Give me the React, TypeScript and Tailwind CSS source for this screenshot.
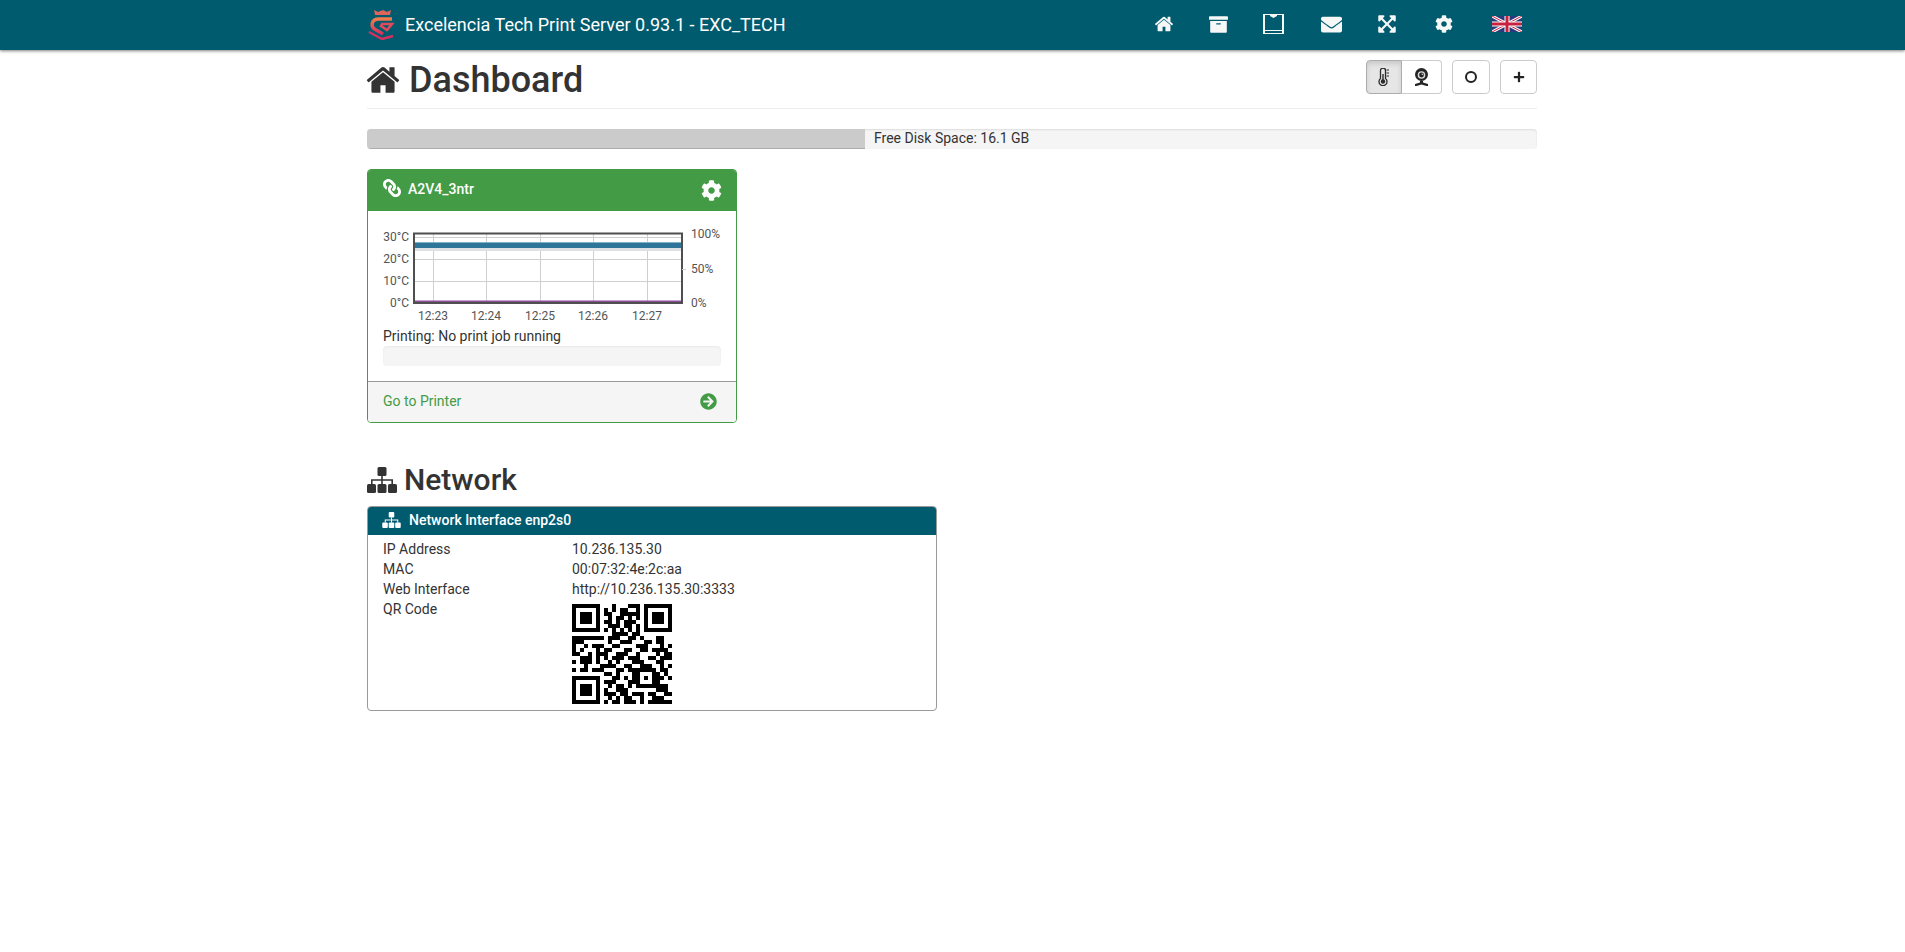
import React from 'react';
import { FaArchive, FaEnvelope, FaExpandArrowsAlt, FaCog, FaLink, FaArrowCircleRight, FaPlus } from 'react-icons/fa';

const qrRows = [
  '1111111000100011101111111',
  '1000001010101100101000001',
  '1011101011001111101011101',
  '1011101001011010101011101',
  '1011101011010111001011101',
  '1000001001110110101000001',
  '1111111010101010101111111',
  '0000000000111101100000000',
  '1111111101110011010001100',
  '1110000001001110001101100',
  '1001011100110000111000101',
  '1010001011000110011011110',
  '1100101110011100100001011',
  '0011101010111011100110111',
  '1011101001010001110001100',
  '0001000111100110011100101',
  '1011011100011011111110110',
  '0000000011010001100011010',
  '1111111000110101101011101',
  '1000001011100011100011000',
  '1011101001011010111111110',
  '1011101010011100000001110',
  '1011101011101101110110011',
  '1000001001010110010011100',
  '1111111010110111010111111',
];

const QrCode = () => (
  <svg width="100" height="100" viewBox="0 0 25 25" shapeRendering="crispEdges">
    {qrRows.map((row, y) =>
      row.split('').map((c, x) => (c === '1' ? <rect key={`${x}-${y}`} x={x} y={y} width="1" height="1" fill="#000" /> : null))
    )}
  </svg>
);

const Logo = () => (
  <svg width="30" height="30" viewBox="0 0 30 30">
    <defs>
      <linearGradient id="lg" x1="0" y1="0" x2="0" y2="1">
        <stop offset="0" stopColor="#ee7c4e" />
        <stop offset="1" stopColor="#d6305f" />
      </linearGradient>
    </defs>
    <path d="M7 0l4 2 5-2 4 2 4-2-1 5H8z" fill="#e0645a" />
    <path d="M25 9H12C4 9 3 17 9 20l7 4" fill="none" stroke="url(#lg)" strokeWidth="3.500" />
    <path d="M15 14h10l-5 6-6-4z" fill="none" stroke="#df4a5c" strokeWidth="2.500" />
    <path d="M2 22l13 7 11-3" fill="none" stroke="#d6305f" strokeWidth="2.500" />
  </svg>
);

// font awesome 4 style house, the roof stands apart from the body
const HomeIcon = ({ size }: { size: number }) => (
  <svg width={size} height={size} viewBox="0 0 1792 1792" fill="currentColor">
    <path d="M1472 992v480q0 26-19 45t-45 19h-384v-384h-256v384h-384q-26 0-45-19t-19-45v-480q0-1 .5-3t.5-3l575-474 575 474q1 2 1 6zm223-69l-62 74q-8 9-21 11h-3q-13 0-21-7l-692-577-692 577q-12 8-24 7-13-2-21-11l-62-74q-8-10-7-23.5t11-21.5l719-599q32-26 76-26t76 26l244 204v-195q0-14 9-23t23-9h192q14 0 23 9t9 23v408l219 182q10 8 11 21.5t-7 23.5z" />
  </svg>
);

const SitemapIcon = ({ w, h }: { w: number; h: number }) => (
  <svg width={w} height={h} viewBox="0 0 30 26" fill="currentColor">
    <rect x="10.500" y="0" width="9" height="9" rx="1.500" />
    <rect x="0" y="17" width="9" height="9" rx="1.500" />
    <rect x="10.500" y="17" width="9" height="9" rx="1.500" />
    <rect x="21" y="17" width="9" height="9" rx="1.500" />
    <path d="M14.200 9h1.600v3.200H26V17h-1.600v-3.200H15.800V17h-1.600v-3.200H5.600V17H4v-4.800h10.200z" />
  </svg>
);

const BoxIcon = () => (
  <svg width="21" height="20" viewBox="0 0 21 20">
    <path fillRule="evenodd" fill="#f6f8f8" d="M0 0h21v20H0zM2 1v15h17V1h-5v1l-3.500 2L7 2V1zM2 17v2h17v-2z" />
    <rect x="3.500" y="17.300" width="4" height="1.500" fill="#005b6f" />
    <rect x="15" y="17.600" width="1.500" height="1.200" fill="#005b6f" />
    <rect x="17" y="17.600" width="1.200" height="1.200" fill="#005b6f" />
  </svg>
);

const UkFlag = () => (
  <svg width="30" height="16" viewBox="0 0 60 32">
    <rect width="60" height="32" fill="#2b3a78" />
    <path d="M0 0l60 32M60 0L0 32" stroke="#fff" strokeWidth="6" />
    <path d="M0 0l60 32M60 0L0 32" stroke="#c8203f" strokeWidth="2" />
    <path d="M30 0v32M0 16h60" stroke="#fff" strokeWidth="10" />
    <path d="M30 0v32M0 16h60" stroke="#c8203f" strokeWidth="6" />
  </svg>
);

const ThermometerIcon = () => (
  <svg width="12" height="18" viewBox="0 0 12 18">
    <path d="M2.500 10.500V2.500a2.500 2.500 0 0 1 5 0v8a4 4 0 1 1-5 0z" fill="#e6e6e6" stroke="#2b2b2b" strokeWidth="1.300" />
    <rect x="4.300" y="6" width="1.400" height="7" fill="#2b2b2b" />
    <circle cx="5" cy="13.500" r="2.200" fill="#2b2b2b" />
    <path d="M8.500 2H11M8.500 5H11M8.500 8H11" stroke="#2b2b2b" strokeWidth="1" />
  </svg>
);

const WebcamIcon = () => (
  <svg width="15" height="18" viewBox="0 0 15 18">
    <circle cx="7.500" cy="6.500" r="6.500" fill="#242424" />
    <circle cx="7.500" cy="7" r="3.800" fill="#d9d9d9" />
    <circle cx="7.500" cy="7" r="2.400" fill="#242424" />
    <circle cx="8.300" cy="6.300" r="0.700" fill="#ddd" />
    <path d="M6 13h3v1.500l5 1.500v2h-1.500L7.500 16.500 2.500 18H1v-2l5-1.500z" fill="#242424" />
  </svg>
);

const TempChart = () => {
  const xTicks = [
    { x: 433, label: '12:23' },
    { x: 486, label: '12:24' },
    { x: 540, label: '12:25' },
    { x: 593, label: '12:26' },
    { x: 647, label: '12:27' },
  ];
  // svg origin sits at x=383, y=222 of the page
  return (
    <svg width="338" height="104" viewBox="383 222 338 104" className="block" style={{ fontFamily: 'Roboto, sans-serif' }}>
      {xTicks.map((t) => (
        <line key={t.x} x1={t.x + 0.5} y1="233" x2={t.x + 0.5} y2="303" stroke="#cfcfcf" />
      ))}
      {[237.5, 259.5, 281.5].map((y) => (
        <line key={y} x1="413" y1={y} x2="682" y2={y} stroke="#cfcfcf" />
      ))}
      <rect x="415" y="248" width="266" height="3" fill="#dfe2e4" />
      <rect x="415" y="243" width="266" height="5" fill="#2f7599" />
      <rect x="415" y="242" width="266" height="1" fill="#7eb2c6" />
      <rect x="415" y="300.500" width="266" height="1.500" fill="#8a4b9a" />
      <rect x="414" y="233.500" width="268" height="69.500" fill="none" stroke="#4f4f4f" strokeWidth="2" />
      <line x1="682" y1="269.500" x2="686" y2="269.500" stroke="#cfcfcf" />
      <g fontSize="12" fill="#545454" textAnchor="end">
        <text x="409" y="241">30°C</text>
        <text x="409" y="263">20°C</text>
        <text x="409" y="285">10°C</text>
        <text x="409" y="307">0°C</text>
      </g>
      <g fontSize="12" fill="#545454">
        <text x="691" y="238">100%</text>
        <text x="691" y="273">50%</text>
        <text x="691" y="307">0%</text>
      </g>
      <g fontSize="12" fill="#545454" textAnchor="middle">
        {xTicks.map((t) => (
          <text key={t.x} x={t.x} y="320">{t.label}</text>
        ))}
      </g>
    </svg>
  );
};

const navItems = [
  { w: 'w-[54px]', icon: <HomeIcon size={20} /> },
  { w: 'w-[54px]', icon: <FaArchive size={19} /> },
  { w: 'w-[56px]', icon: <BoxIcon /> },
  { w: 'w-[60px]', icon: <FaEnvelope size={21} /> },
  { w: 'w-[52px]', icon: <FaExpandArrowsAlt size={20} /> },
  { w: 'w-[62px]', icon: <FaCog size={18} /> },
  { w: 'w-[64px]', icon: <UkFlag /> },
];

const netRows = [
  { label: 'IP Address', value: '10.236.135.30' },
  { label: 'MAC', value: '00:07:32:4e:2c:aa' },
  { label: 'Web Interface', value: 'http://10.236.135.30:3333' },
];

export default function App() {
  return (
    <div className="min-h-[952px] bg-white text-[14px] leading-[20px] text-[#333]" style={{ fontFamily: 'Roboto, sans-serif' }}>
      <nav className="h-[50px] bg-[#005b6f] shadow-[0_1px_3px_rgba(0,0,0,0.5)]">
        <div className="w-[1170px] ml-[367px] h-full flex items-center">
          <div className="w-[38px] flex"><Logo /></div>
          <span className="text-[18px] text-white">Excelencia Tech Print Server 0.93.1 - EXC_TECH</span>
          <div className="ml-auto -mr-[2px] flex items-center h-full text-[#f6f8f8]">
            {navItems.map((item, i) => (
              <a key={i} className={`${item.w} flex items-center justify-center pb-[2px]`}>{item.icon}</a>
            ))}
          </div>
        </div>
      </nav>

      <main className="w-[1170px] ml-[367px]">
        <div className="h-[59px] border-b border-[#eee] flex items-start">
          <h1 className="flex items-center gap-[8px] text-[36px] leading-[40px] font-medium text-[#333] mt-[10px]">
            <span className="-ml-[2px] flex"><HomeIcon size={36} /></span> Dashboard
          </h1>
          <div className="ml-auto flex gap-[10px] mt-[10px]">
            <div className="flex">
              <button className="w-[36px] h-[34px] flex items-center justify-center bg-[#e6e6e6] border border-[#adadad] rounded-l-[4px] shadow-[inset_0_3px_5px_rgba(0,0,0,0.125)]">
                <ThermometerIcon />
              </button>
              <button className="w-[40px] h-[34px] flex items-center justify-center border border-[#ccc] border-l-0 rounded-r-[4px]">
                <WebcamIcon />
              </button>
            </div>
            <button className="w-[38px] h-[34px] flex items-center justify-center border border-[#ccc] rounded-[4px]">
              <span className="w-[12px] h-[12px] rounded-full border-2 border-[#222]" />
            </button>
            <button className="w-[37px] h-[34px] flex items-center justify-center border border-[#ccc] rounded-[4px] text-[#222]">
              <FaPlus size={12} />
            </button>
          </div>
        </div>

        <div className="mt-[20px] h-[20px] bg-[#f5f5f5] rounded-[4px] flex overflow-hidden shadow-[inset_0_1px_2px_rgba(0,0,0,0.1)]">
          <div className="w-[498px] bg-[#cbcbcb] shadow-[inset_0_-1px_0_rgba(0,0,0,0.15)]" />
          <span className="ml-[9px] leading-[19px]">Free Disk Space: 16.1 GB</span>
        </div>

        <section className="mt-[20px] w-[370px] h-[254px] border border-[#439b45] rounded-[4px] flex flex-col overflow-hidden">
          <div className="h-[42px] shrink-0 bg-[#439b45] text-white flex items-center pl-[15px] pr-[14px] pb-[2px] -mt-px">
            <FaLink size={18} className="-scale-x-100 -mt-[2px]" />
            <span className="ml-[7px] font-medium">A2V4_3ntr</span>
            <FaCog size={21} className="ml-auto mt-[2px]" />
          </div>
          <div className="flex-1 px-[15px] pt-[11px]">
            <TempChart />
            <div className="leading-[20px]">Printing: No print job running</div>
            <div className="h-[20px] bg-[#f5f5f5] rounded-[4px] shadow-[inset_0_1px_2px_rgba(0,0,0,0.05)]" />
          </div>
          <div className="h-[41px] shrink-0 bg-[#f5f5f5] border-t border-[#999] flex items-center justify-between pl-[15px] pr-[19px] pb-[2px] text-[#439b45]">
            <span>Go to Printer</span>
            <FaArrowCircleRight size={17} />
          </div>
        </section>

        <h2 className="flex items-center gap-[7px] mt-[40px] text-[30px] leading-[33px] font-medium text-[#333]">
          <SitemapIcon w={30} h={26} /> Network
        </h2>

        <section className="mt-[10px] w-[570px] h-[205px] border border-[#999] rounded-[4px] overflow-hidden">
          <div className="h-[29px] bg-[#005b6f] text-white flex items-center pl-[15px] pb-[2px] -mt-px -mx-px">
            <SitemapIcon w={19} h={16} />
            <span className="ml-[8px] font-medium">Network Interface enp2s0</span>
          </div>
          <div className="pl-[15px] pt-[4px]">
            {netRows.map((r) => (
              <div key={r.label} className="flex">
                <div className="w-[189px]">{r.label}</div>
                <div>{r.value}</div>
              </div>
            ))}
            <div className="flex">
              <div className="w-[189px]">QR Code</div>
              <div className="mt-[5px]"><QrCode /></div>
            </div>
          </div>
        </section>
      </main>
    </div>
  );
}
